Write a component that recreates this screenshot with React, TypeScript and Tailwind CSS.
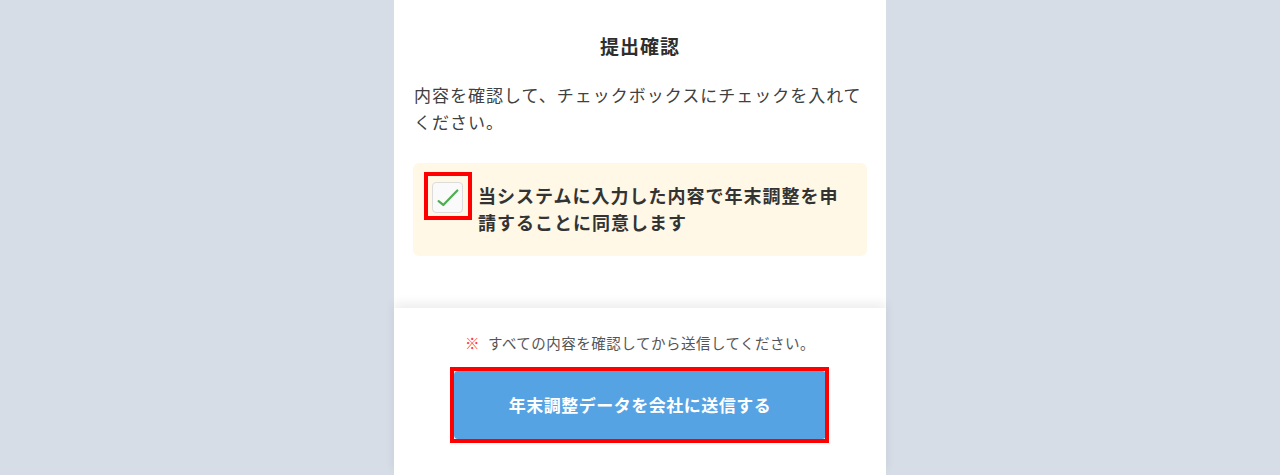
import { useState } from 'react';

const jp = { fontFamily: '"Noto Sans CJK JP", "Noto Sans", sans-serif' };

export default function App() {
  const [agreed, setAgreed] = useState(true);

  return (
    <div className="flex h-[475px] w-full justify-center bg-[#d6dde7]" style={jp}>
      <div className="flex h-full w-[492px] flex-col bg-white">
        {/* Confirmation body */}
        <div className="flex-1 px-[19px] pt-[32px]">
          <h2 className="text-center text-[19px] font-bold leading-[27px] tracking-[1px] text-[#2e2e2e]">
            提出確認
          </h2>
          <p className="mt-[22px] pl-px text-[17px] leading-[27px] tracking-[1px] text-[#404040]">
            内容を確認して、チェックボックスにチェックを入れてください。
          </p>

          <label className="mt-[28px] flex cursor-pointer items-start gap-[15px] rounded-md bg-[#fff8e7] pb-[20px] pl-[19px] pr-[16px] pt-[19px]">
            <span className="relative shrink-0">
              <input
                type="checkbox"
                className="sr-only"
                checked={agreed}
                onChange={() => setAgreed(!agreed)}
              />
              <span className="flex h-[31px] w-[31px] items-center justify-center rounded-[4px] border border-[#dcdcdc] bg-[#fafafa]">
                {agreed && (
                  <svg viewBox="0 0 31 31" className="h-[31px] w-[31px]">
                    <path
                      d="M6 19.5 L11 23.5 L26 8"
                      fill="none"
                      stroke="#4caf50"
                      strokeWidth="2.4"
                      strokeLinecap="round"
                      strokeLinejoin="round"
                    />
                  </svg>
                )}
              </span>
              <span className="pointer-events-none absolute -left-[8px] -top-[10px] h-[48px] w-[48px] border-4 border-[#ff0000]" />
            </span>
            <span className="text-[18px] font-bold leading-[27px] tracking-[1px] text-[#333]">
              当システムに入力した内容で年末調整を申請することに同意します
            </span>
          </label>
        </div>

        {/* Submit footer */}
        <div className="relative h-[167px] shrink-0 bg-white pt-[25px] shadow-[0_-5px_10px_rgba(0,0,0,0.07)]">
          <p className="text-center text-[14.5px] leading-[20px] tracking-[0.5px] text-[#555]">
            <span className="mr-[8px] font-bold text-[#ff3b3b]">※</span>
            すべての内容を確認してから送信してください。
          </p>
          <div className="mt-[18px] flex justify-center">
            <div className="relative">
              <button
                type="button"
                className="h-[68px] w-[372px] rounded-[4px] bg-[#56a3e4] text-[17px] font-bold tracking-[0.5px] text-white"
              >
                年末調整データを会社に送信する
              </button>
              <span className="pointer-events-none absolute -left-[4px] -top-[4px] h-[76px] w-[379px] border-4 border-[#ff0000]" />
            </div>
          </div>
        </div>
      </div>
    </div>
  );
}
